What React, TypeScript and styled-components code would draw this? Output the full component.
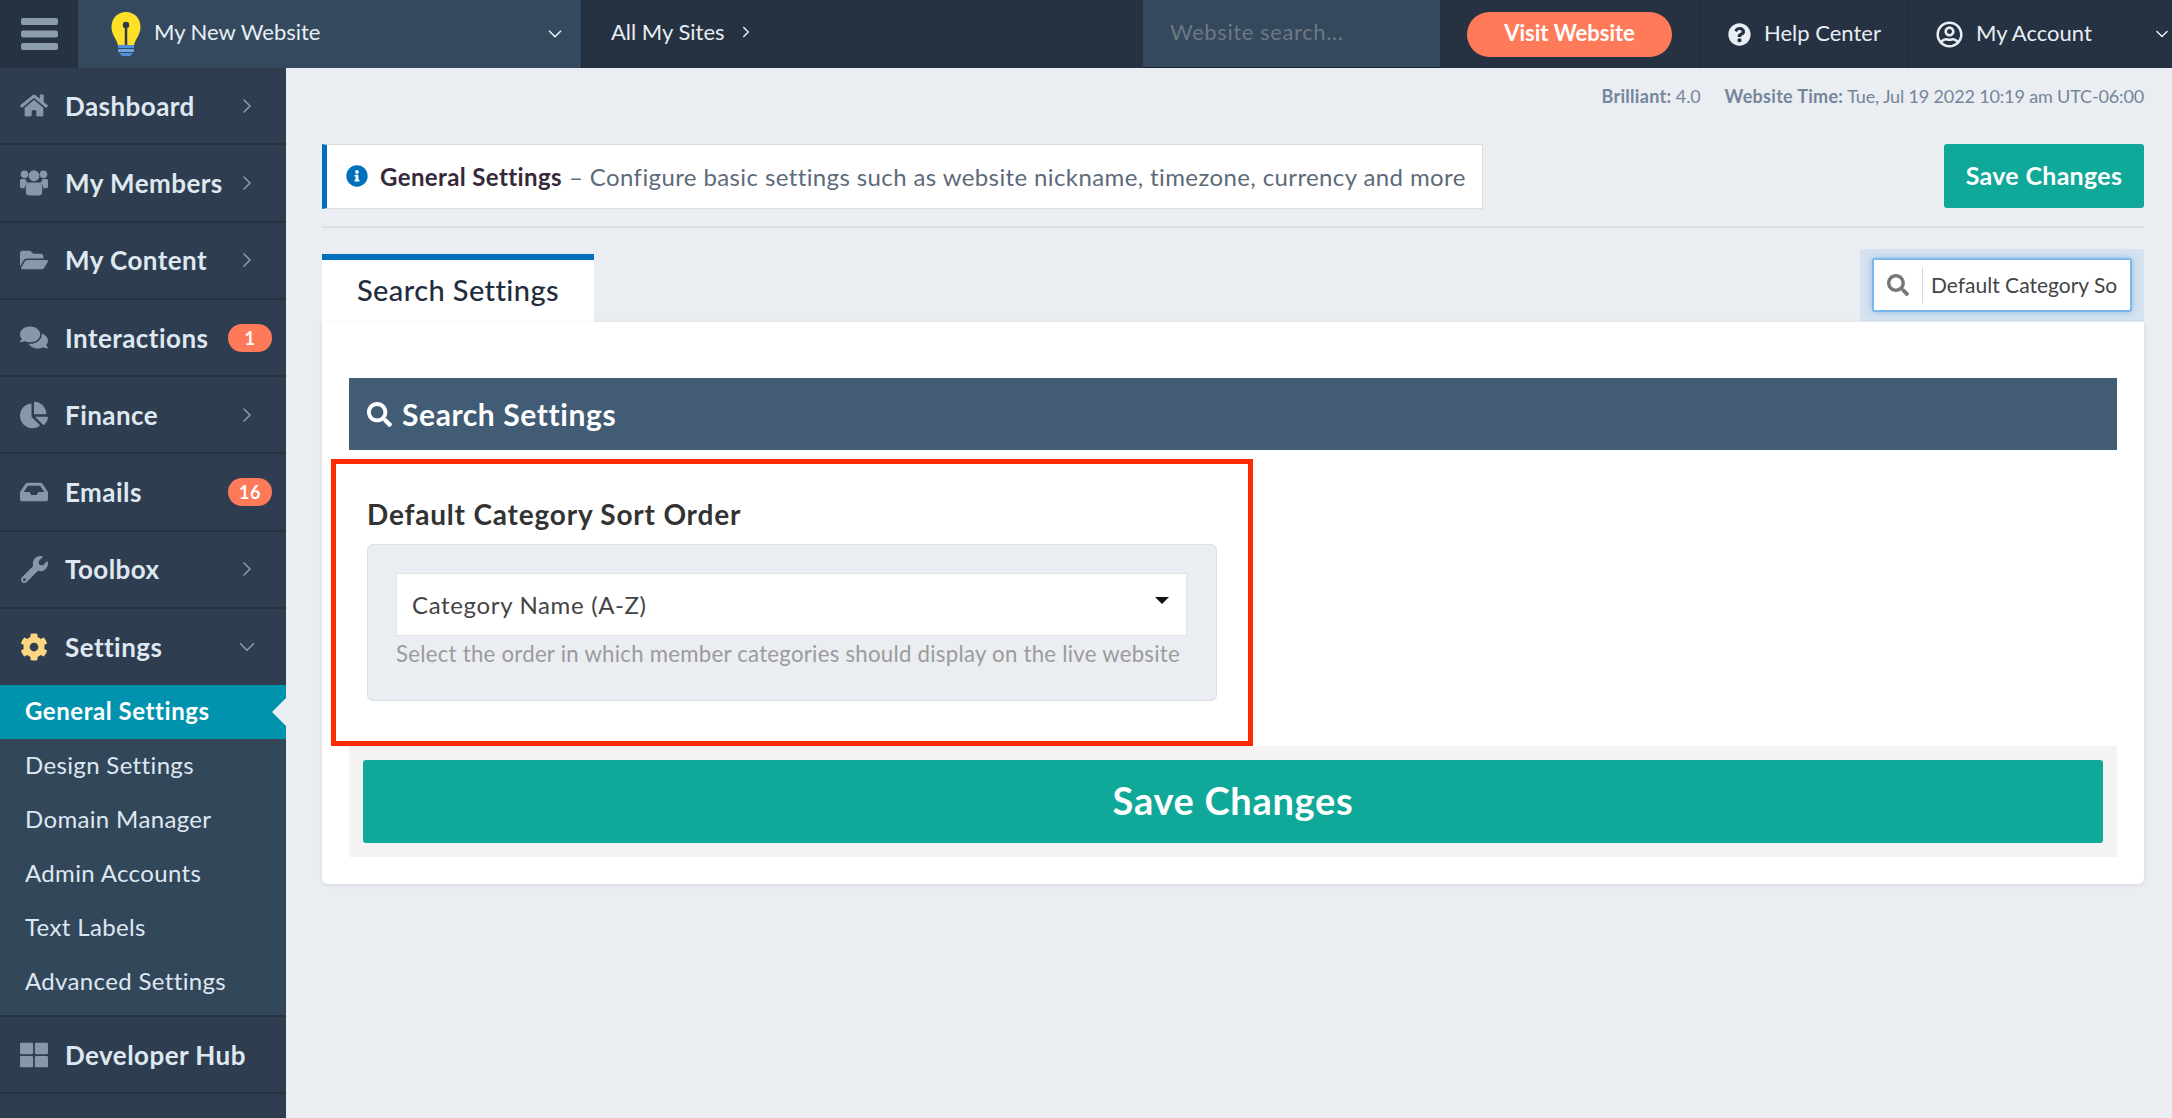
import React from "react";
import styled, { createGlobalStyle } from "styled-components";
import { ChevronDown, ChevronRight } from "lucide-react";
import {
  FaChartPie,
  FaCog,
  FaComments,
  FaFolderOpen,
  FaHome,
  FaInbox,
  FaInfoCircle,
  FaQuestionCircle,
  FaRegUserCircle,
  FaSearch,
  FaThLarge,
  FaWrench,
} from "react-icons/fa";

const GlobalStyle = createGlobalStyle`
  html, body {
    margin: 0;
    padding: 0;
    height: 100%;
    background: #eaedf2;
    font-family: Lato, "Open Sans", sans-serif;
  }
  * { box-sizing: border-box; }
`;

const Page = styled.div`
  width: 2172px;
  height: 1118px;
  overflow: hidden;
  display: grid;
  grid-template-columns: 286px 1fr;
  grid-template-rows: 68px 1fr;
`;

// top bar
const TopBar = styled.header`
  grid-column: 1 / 3;
  display: flex;
  align-items: stretch;
  background: #263242;
  color: #e8eef4;
  font-size: 22px;
  line-height: 26px;
`;

const MenuCell = styled.div`
  width: 78px;
  display: flex;
  align-items: center;
  justify-content: center;
`;

const SiteCell = styled.div`
  width: 504px;
  display: flex;
  align-items: center;
  padding: 0 15px 0 33px;
  background: #34495e;
  border-right: 1px solid #1e2835;
`;

const SiteName = styled.span`
  margin: 0 0 4px 13px;
  flex: 1;
`;

const AllSites = styled.div`
  width: 561px;
  display: flex;
  align-items: center;
  gap: 12px;
  padding: 0 0 4px 29px;
`;

const SearchCell = styled.div`
  width: 297px;
  display: flex;
  align-items: center;
  padding: 0 0 4px 27px;
  background: #34495e;
  border-bottom: 1px solid #1e2835;
  color: #6d7884;
  letter-spacing: 0.6px;
`;

const VisitCell = styled.div`
  width: 260px;
  display: flex;
  align-items: center;
  padding-left: 27px;
  border-right: 1px solid #1e2835;
`;

const VisitButton = styled.div`
  width: 205px;
  height: 45px;
  padding-bottom: 2px;
  border-radius: 23px;
  background: #ff7a59;
  color: #fff;
  font-weight: 700;
  font-size: 22px;
  display: flex;
  align-items: center;
  justify-content: center;
`;

const HelpCell = styled.div`
  width: 209px;
  display: flex;
  align-items: center;
  gap: 13px;
  padding-left: 28px;
  border-right: 1px solid #1e2835;

  span {
    margin-bottom: 3px;
  }
`;

const AccountCell = styled.div`
  flex: 1;
  display: flex;
  align-items: center;
  padding-left: 27px;
`;

const AccountName = styled.span`
  margin: 0 0 3px 13px;
  flex: 1;
`;

// sidebar
const Sidebar = styled.nav`
  background: #2e3e50;
  display: flex;
  flex-direction: column;
`;

const NavItem = styled.div<{ $open?: boolean }>`
  height: ${(p) => (p.$open ? "76px" : "77.3px")};
  flex: none;
  display: flex;
  align-items: center;
  padding: 0 14px 0 20px;
  border-bottom: ${(p) => (p.$open ? "none" : "2px solid #27343f")};
  color: #dfe8f1;
  font-size: 26px;
  font-weight: 700;
  letter-spacing: 0.45px;
`;

const NavIcon = styled.span<{ $active?: boolean; $size?: number }>`
  width: 28px;
  margin-right: 17px;
  display: flex;
  justify-content: center;
  font-size: ${(p) => p.$size ?? 28}px;
  color: ${(p) => (p.$active ? "#fdd682" : "#8799a8")};
`;

const NavLabel = styled.span`
  flex: 1;
`;

const NavChevron = styled.span`
  width: 32px;
  margin-right: 9px;
  display: flex;
  justify-content: center;
  color: #8799a8;
`;

const Badge = styled.span`
  min-width: 44px;
  height: 28px;
  border-radius: 14px;
  background: #ff7a59;
  color: #fff;
  font-size: 18px;
  font-weight: 700;
  display: flex;
  align-items: center;
  justify-content: center;
`;

const SubMenu = styled.div`
  flex: none;
  padding-bottom: 6px;
  background: #33475b;
  border-bottom: 2px solid #27343f;
`;

const SubItem = styled.div<{ $active?: boolean }>`
  position: relative;
  height: 54px;
  display: flex;
  align-items: center;
  padding: 0 0 3px 25px;
  font-size: 24px;
  letter-spacing: ${(p) => (p.$active ? "0.55px" : "0.35px")};
  font-weight: ${(p) => (p.$active ? 700 : 400)};
  color: ${(p) => (p.$active ? "#fff" : "#dfe8f1")};
  background: ${(p) => (p.$active ? "#0093ae" : "transparent")};

  ${(p) =>
    p.$active &&
    `&::after {
      content: "";
      position: absolute;
      right: 0;
      top: 13px;
      border-style: solid;
      border-width: 14px 14px 14px 0;
      border-color: transparent #eaedf2 transparent transparent;
    }`}
`;

// main column
const Main = styled.main`
  padding: 0 28px 0 36px;
  display: flex;
  flex-direction: column;
`;

const StatusLine = styled.div`
  height: 76px;
  display: flex;
  justify-content: flex-end;
  gap: 24px;
  padding-top: 17px;
  font-size: 18px;
  line-height: 22px;
  letter-spacing: -0.15px;
  color: #75859a;

  b {
    font-weight: 700;
    letter-spacing: 0.3px;
  }
`;

const HeadRow = styled.div`
  display: flex;
  justify-content: space-between;
  align-items: flex-start;
  height: 84px;
  border-bottom: 2px solid #dde0e4;
`;

const Alert = styled.div`
  width: 1161px;
  height: 65px;
  display: flex;
  align-items: center;
  padding: 0 0 1px 19px;
  background: #fff;
  border: 1px solid #dcdcdc;
  border-left: 5px solid #0070bc;
  font-size: 24px;
  letter-spacing: 0.39px;
  color: #5d6a79;
`;

const AlertIcon = styled.span`
  display: flex;
  font-size: 22px;
  color: #0070bc;
  margin-right: 12px;
`;

const AlertTitle = styled.b`
  font-weight: 700;
  color: #37283a;
  margin-right: 7px;
`;

const SaveSmall = styled.div`
  width: 200px;
  height: 64px;
  padding-bottom: 2px;
  border-radius: 3px;
  background: #10a899;
  color: #fff;
  font-size: 25px;
  font-weight: 700;
  letter-spacing: 0.3px;
  display: flex;
  align-items: center;
  justify-content: center;
`;

const TabRow = styled.div`
  height: 94px;
  display: flex;
  justify-content: space-between;
  align-items: flex-end;
`;

const Tab = styled.div`
  width: 272px;
  height: 68px;
  padding-bottom: 4px;
  border-top: 6px solid #0070bc;
  background: #fff;
  color: #1f2d3d;
  font-size: 29px;
  font-weight: 500;
  letter-spacing: 0.4px;
  display: flex;
  align-items: center;
  justify-content: center;
`;

const FinderWrap = styled.div`
  width: 284px;
  height: 72px;
  margin-bottom: 1px;
  padding: 9px 12px;
  border-radius: 3px 3px 0 0;
  background: #d5e2ef;
`;

const Finder = styled.div`
  height: 54px;
  display: flex;
  align-items: center;
  background: #fff;
  border: 2px solid #7ab8ec;
  border-radius: 3px;
  box-shadow: 0 0 6px rgba(90, 165, 230, 0.6);
  overflow: hidden;
`;

const FinderIcon = styled.span`
  width: 49px;
  height: 36px;
  flex: none;
  display: flex;
  align-items: center;
  justify-content: center;
  font-size: 22px;
  color: #777;
  border-right: 1px solid #d8d8d8;
`;

const FinderText = styled.span`
  padding: 0 0 2px 8px;
  font-size: 21px;
  color: #444;
  white-space: nowrap;
`;

const Card = styled.section`
  height: 562px;
  padding: 56px 27px 0;
  background: #fff;
  border-radius: 0 0 6px 6px;
  box-shadow: 0 1px 4px rgba(0, 0, 0, 0.1);
`;

const SectionHead = styled.h2`
  margin: 0;
  height: 72px;
  display: flex;
  align-items: center;
  gap: 10px;
  padding-left: 18px;
  background: #435c76;
  color: #fff;
  font-size: 30px;
  font-weight: 700;
  letter-spacing: 0.6px;
`;

const Highlight = styled.div`
  width: 922px;
  height: 287px;
  margin: 9px 0 0 -18px;
  padding: 30px 31px 0;
  border: 5px solid #ff2a00;
`;

const FieldLabel = styled.div`
  height: 41px;
  font-size: 28px;
  line-height: 40px;
  font-weight: 700;
  letter-spacing: 0.8px;
  color: #333;
`;

const Well = styled.div`
  width: 850px;
  height: 157px;
  margin-top: 9px;
  padding: 28px 29px 0 28px;
  border: 1px solid #dcdfe3;
  border-radius: 6px;
  background: #eaedf2;
`;

const SelectBox = styled.div`
  height: 63px;
  display: flex;
  align-items: center;
  padding: 0 17px 0 15px;
  background: #fff;
  border: 1px solid #e3e3e3;
  color: #444;
  font-size: 24px;
  letter-spacing: 0.65px;
`;

const SelectValue = styled.span`
  flex: 1;
`;

const SelectCaret = styled.span`
  margin-top: -8px;
  border-style: solid;
  border-width: 7px 7px 0;
  border-color: #111 transparent transparent;
`;

const HelpText = styled.div`
  margin-top: 3px;
  font-size: 22.2px;
  line-height: 30px;
  letter-spacing: 0.26px;
  color: #9b9b9b;
  white-space: nowrap;
`;

const SaveBar = styled.div`
  height: 111px;
  padding: 14px 14px 0;
  background: #f3f3f3;
`;

const SaveWide = styled.div`
  height: 83px;
  padding-bottom: 4px;
  border-radius: 3px;
  background: #10a899;
  color: #fff;
  font-size: 38px;
  font-weight: 700;
  letter-spacing: 0.7px;
  display: flex;
  align-items: center;
  justify-content: center;
`;

function MenuBars() {
  return (
    <svg width="37" height="32" viewBox="0 0 37 32" fill="#8b9dab">
      <rect y="0" width="37" height="7" rx="2" />
      <rect y="12.5" width="37" height="7" rx="2" />
      <rect y="25" width="37" height="7" rx="2" />
    </svg>
  );
}

function Bulb() {
  return (
    <svg width="30" height="44" viewBox="0 0 30 44">
      <path
        d="M15 0C6.500 0 0.500 6.500 0.500 15c0 7 4 10.500 6 16.500l0.500 2.500h16l0.500-2.500c2-6 6-9.500 6-16.500C29.500 6.500 23.500 0 15 0z"
        fill="#ffdf27"
      />
      <path d="M15 14v19" stroke="#2f3a45" strokeWidth="2.500" />
      <circle cx="15" cy="13" r="3.200" fill="#2f3a45" />
      <rect x="7" y="33" width="16" height="3" fill="#4f8fdc" />
      <rect x="7" y="37" width="16" height="3" fill="#6aa5e8" />
      <path d="M8 41h14l-3 3h-8z" fill="#4f8fdc" />
    </svg>
  );
}

function MembersIcon() {
  return (
    <svg width="31" height="29" viewBox="0 0 31 29" fill="currentColor">
      <circle cx="15.500" cy="7" r="6" />
      <circle cx="5" cy="5.500" r="4.200" />
      <circle cx="26" cy="5.500" r="4.200" />
      <path d="M0 12.500c0-1.500 1-2 2-2h4c.6 2 1.500 3.200 3 4.500-2.200 1-3.500 3-3.800 6H2c-1.200 0-2-.8-2-2z" />
      <path d="M31 12.500c0-1.500-1-2-2-2h-4c-.6 2-1.500 3.200-3 4.500 2.200 1 3.500 3 3.800 6H29c1.200 0 2-.8 2-2z" />
      <path d="M10.500 14.500h10c2.500 0 4 2 4 4.500v6c0 2.500-1.500 4-4 4h-10c-2.500 0-4-1.500-4-4v-6c0-2.500 1.500-4.500 4-4.500z" />
    </svg>
  );
}

const navTop = [
  { label: "Dashboard", icon: <FaHome />, size: 29 },
  { label: "My Members", icon: <MembersIcon />, size: 29 },
  { label: "My Content", icon: <FaFolderOpen />, size: 32 },
  { label: "Interactions", icon: <FaComments />, size: 31, badge: "1" },
  { label: "Finance", icon: <FaChartPie />, size: 28 },
  { label: "Emails", icon: <FaInbox />, size: 28, badge: "16" },
  { label: "Toolbox", icon: <FaWrench />, size: 27 },
];

const subItems = ["Design Settings", "Domain Manager", "Admin Accounts", "Text Labels", "Advanced Settings"];

export default function App() {
  return (
    <Page>
      <GlobalStyle />
      <TopBar>
        <MenuCell>
          <MenuBars />
        </MenuCell>
        <SiteCell>
          <Bulb />
          <SiteName>My New Website</SiteName>
          <ChevronDown size={22} strokeWidth={1.8} />
        </SiteCell>
        <AllSites>
          All My Sites
          <ChevronRight size={18} strokeWidth={2} />
        </AllSites>
        <SearchCell>Website search...</SearchCell>
        <VisitCell>
          <VisitButton>Visit Website</VisitButton>
        </VisitCell>
        <HelpCell>
          <FaQuestionCircle size={23} />
          <span>Help Center</span>
        </HelpCell>
        <AccountCell>
          <FaRegUserCircle size={27} />
          <AccountName>My Account</AccountName>
          <ChevronDown size={20} strokeWidth={1.8} />
        </AccountCell>
      </TopBar>

      <Sidebar>
        {navTop.map((item) => (
          <NavItem key={item.label}>
            <NavIcon $size={item.size}>{item.icon}</NavIcon>
            <NavLabel>{item.label}</NavLabel>
            {item.badge ? (
              <Badge>{item.badge}</Badge>
            ) : (
              <NavChevron>
                <ChevronRight size={24} strokeWidth={1.6} />
              </NavChevron>
            )}
          </NavItem>
        ))}
        <NavItem $open>
          <NavIcon $active>
            <FaCog />
          </NavIcon>
          <NavLabel>Settings</NavLabel>
          <NavChevron>
            <ChevronDown size={26} strokeWidth={1.6} />
          </NavChevron>
        </NavItem>
        <SubMenu>
          <SubItem $active>General Settings</SubItem>
          {subItems.map((label) => (
            <SubItem key={label}>{label}</SubItem>
          ))}
        </SubMenu>
        <NavItem>
          <NavIcon>
            <FaThLarge />
          </NavIcon>
          <NavLabel>Developer Hub</NavLabel>
        </NavItem>
      </Sidebar>

      <Main>
        <StatusLine>
          <span>
            <b>Brilliant:</b> 4.0
          </span>
          <span>
            <b>Website Time:</b> Tue, Jul 19 2022 10:19 am UTC-06:00
          </span>
        </StatusLine>
        <HeadRow>
          <Alert>
            <AlertIcon>
              <FaInfoCircle />
            </AlertIcon>
            <AlertTitle>General Settings</AlertTitle>– Configure basic settings such as website nickname, timezone,
            currency and more
          </Alert>
          <SaveSmall>Save Changes</SaveSmall>
        </HeadRow>
        <TabRow>
          <Tab>Search Settings</Tab>
          <FinderWrap>
            <Finder>
              <FinderIcon>
                <FaSearch />
              </FinderIcon>
              <FinderText>Default Category So</FinderText>
            </Finder>
          </FinderWrap>
        </TabRow>
        <Card>
          <SectionHead>
            <FaSearch size={25} />
            Search Settings
          </SectionHead>
          <Highlight>
            <FieldLabel>Default Category Sort Order</FieldLabel>
            <Well>
              <SelectBox>
                <SelectValue>Category Name (A-Z)</SelectValue>
                <SelectCaret />
              </SelectBox>
              <HelpText>Select the order in which member categories should display on the live website</HelpText>
            </Well>
          </Highlight>
          <SaveBar>
            <SaveWide>Save Changes</SaveWide>
          </SaveBar>
        </Card>
      </Main>
    </Page>
  );
}
